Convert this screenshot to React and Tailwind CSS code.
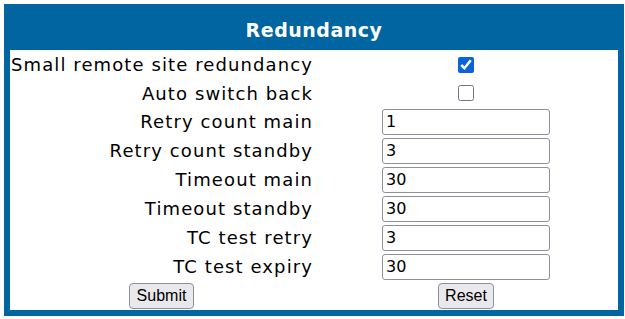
import React from 'react';

const font = { fontFamily: '"DejaVu Sans", Verdana, sans-serif' };
const btnFont = { fontFamily: '"Liberation Sans", Arial, sans-serif' };

const fields = [
  { label: 'Retry count main', value: '1' },
  { label: 'Retry count standby', value: '3' },
  { label: 'Timeout main', value: '30' },
  { label: 'Timeout standby', value: '30' },
  { label: 'TC test retry', value: '3' },
  { label: 'TC test expiry', value: '30' },
];

const Label = ({ h = 'h-[29px]', children }) => (
  <div className={`${h} flex items-center justify-end pr-0 text-[18px] tracking-[1.1px] text-black`}>{children}</div>
);

export default function App() {
  return (
    <div className="bg-white w-[625px] h-[319px] pt-[4px] pl-[4px]" style={font}>
      <div className="w-[620px] border-[6px] border-[#0065a0] bg-white">
        <div className="h-[40px] bg-[#0065a0] flex items-center justify-center text-white font-bold text-[19px] tracking-[0.5px]">
          Redundancy
        </div>
        <div className="grid grid-cols-[303px_1fr]">
          <Label>Small remote site redundancy</Label>
          <div className="flex items-center justify-center">
            <input type="checkbox" defaultChecked className="w-4 h-4 m-0 accent-[#0b63d9]" />
          </div>
          <Label h="h-[28px]">Auto switch back</Label>
          <div className="flex items-center justify-center">
            <input type="checkbox" className="w-4 h-4 m-0" />
          </div>
          {fields.map((f) => (
            <React.Fragment key={f.label}>
              <Label>{f.label}</Label>
              <div className="flex items-center justify-center pl-[1px]">
                <input
                  type="text"
                  defaultValue={f.value}
                  className="w-[168px] h-[26px] border border-[#8f8f9d] rounded-[3px] px-[3px] text-[16px] text-black outline-none"
                  style={font}
                />
              </div>
            </React.Fragment>
          ))}
          <div className="h-[29px] flex items-center justify-center">
            <button
              type="button"
              className="h-[26px] px-[7px] bg-[#e9e9ed] border border-[#8f8f9d] rounded-[4px] text-[16px] text-black"
              style={btnFont}
            >
              Submit
            </button>
          </div>
          <div className="flex items-center justify-center pl-[1px]">
            <button
              type="button"
              className="h-[26px] px-[6px] bg-[#e9e9ed] border border-[#8f8f9d] rounded-[4px] text-[16px] text-black"
              style={btnFont}
            >
              Reset
            </button>
          </div>
        </div>
      </div>
    </div>
  );
}
